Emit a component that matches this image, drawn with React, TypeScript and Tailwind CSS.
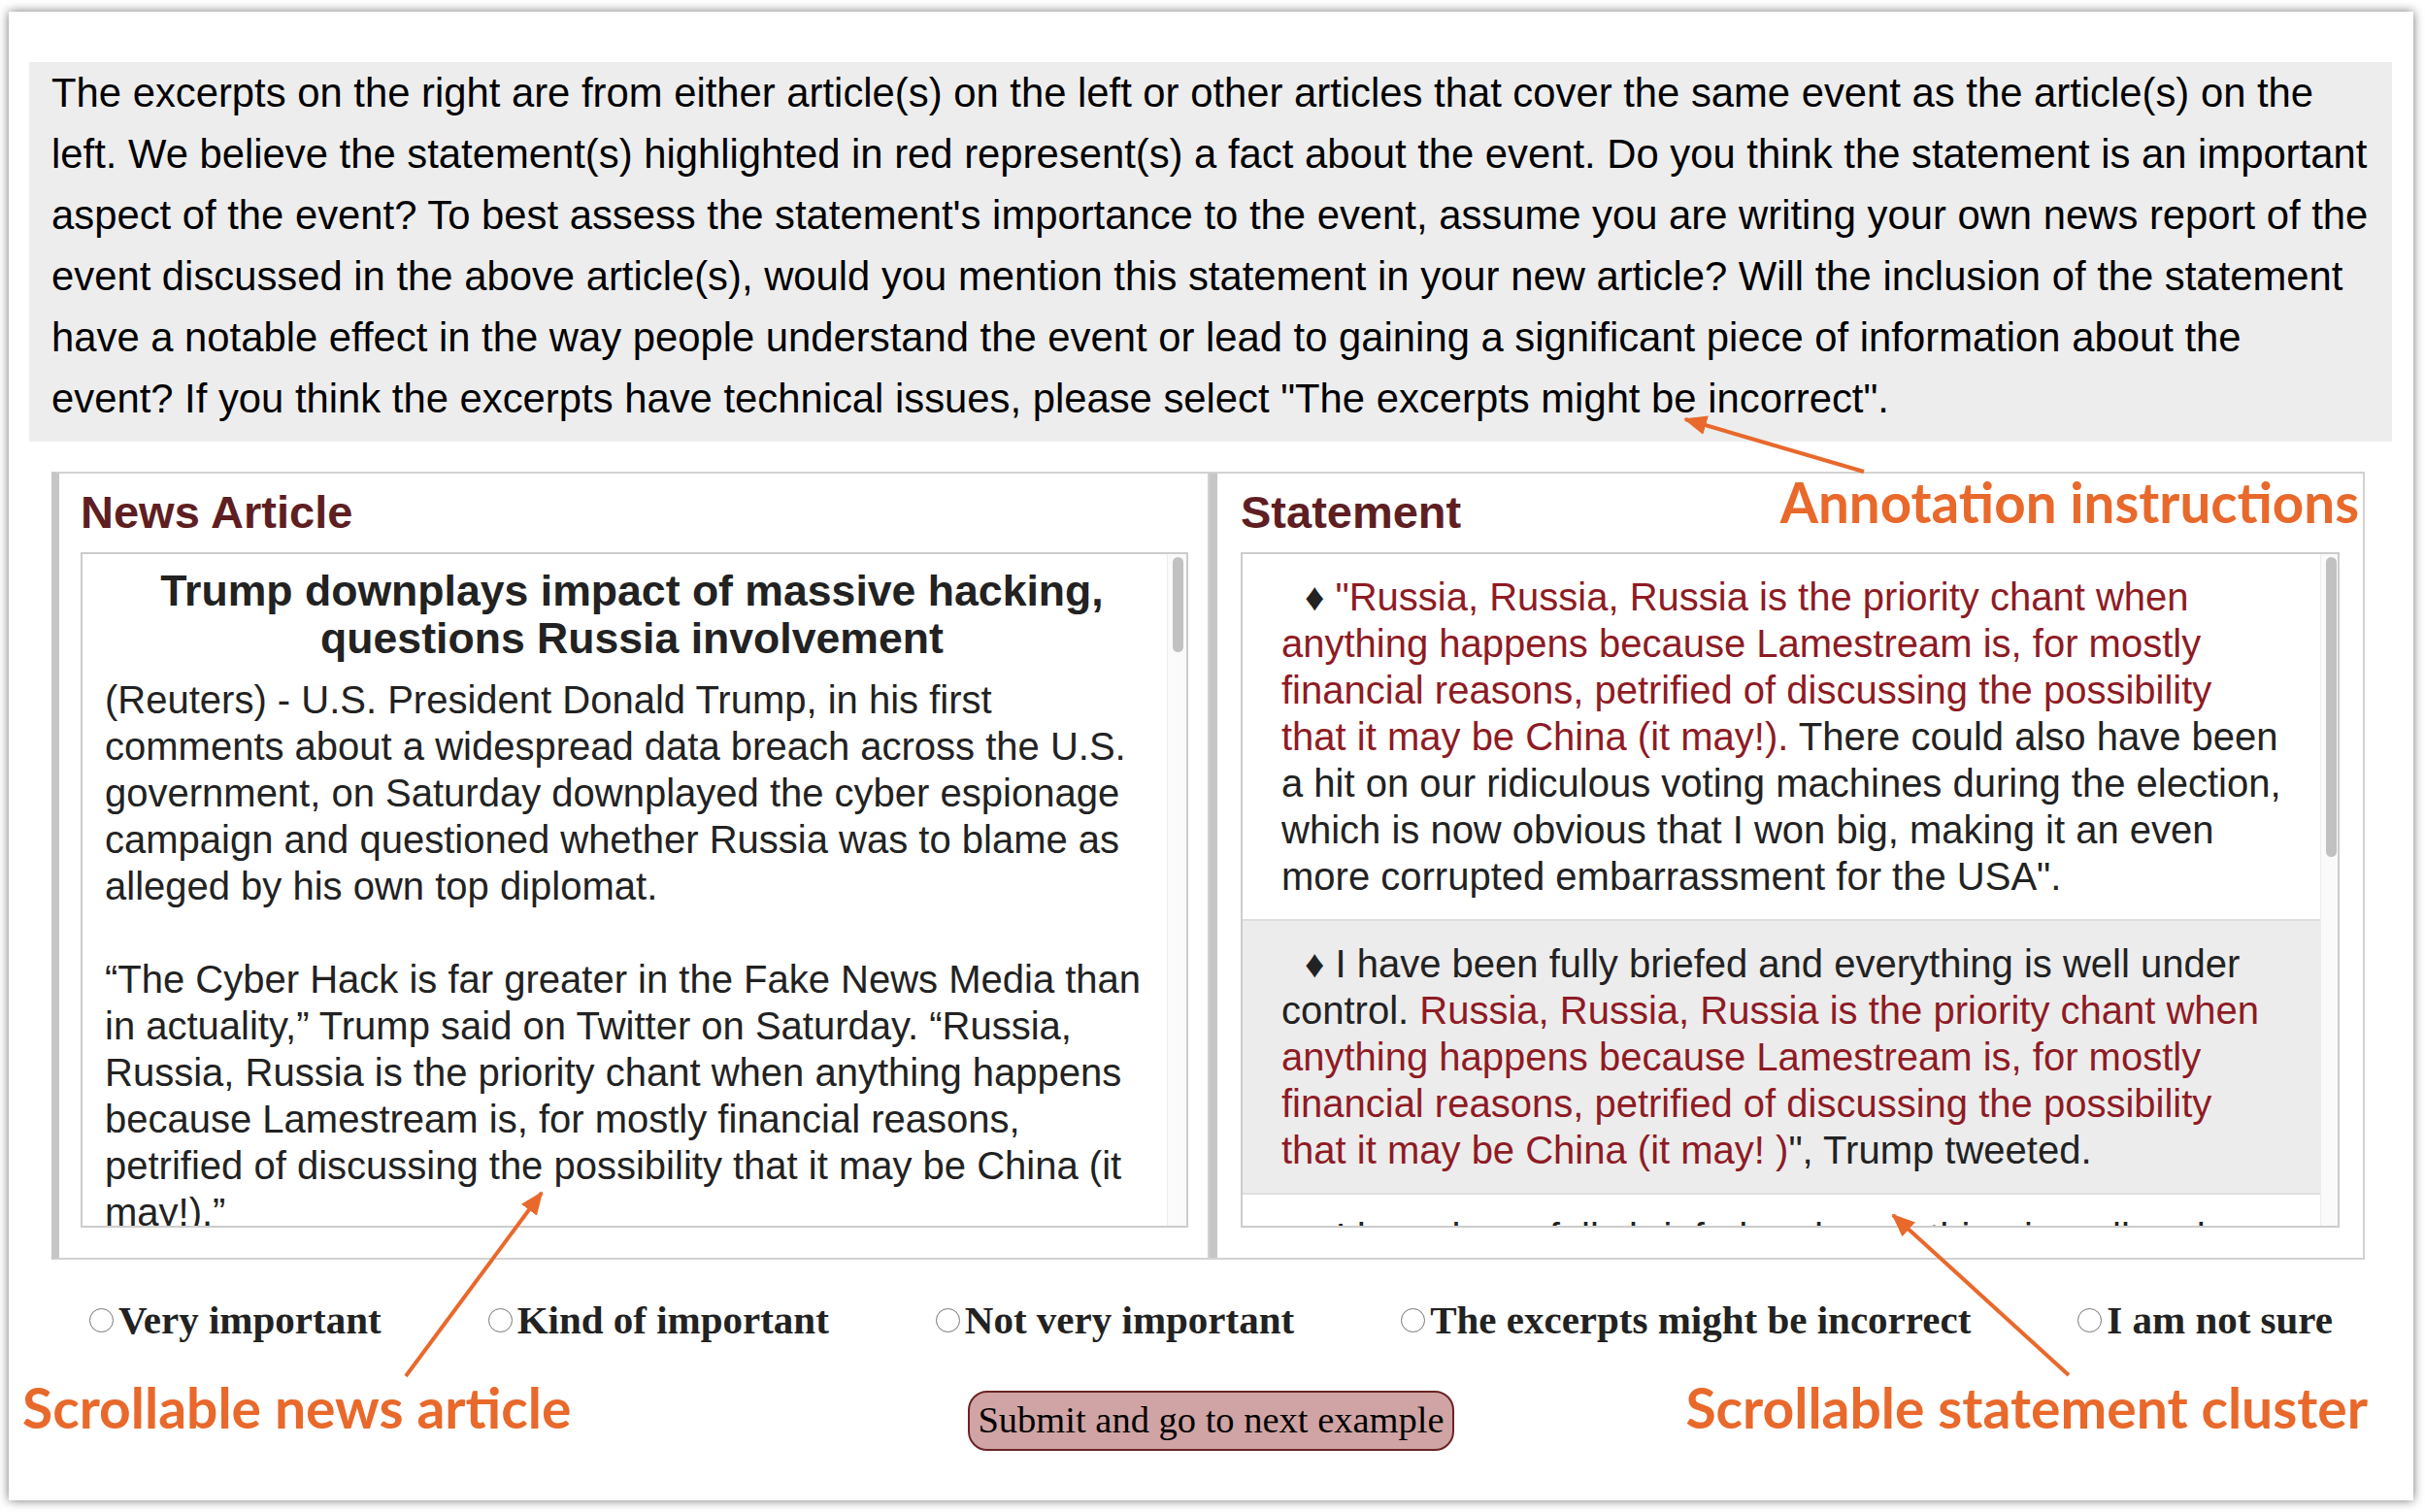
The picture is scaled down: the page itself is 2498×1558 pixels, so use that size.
import React from "react";

export default function App() {
  const red = "text-[#8e1b24]";
  return (
    <div className="relative w-[2498px] h-[1558px] bg-white pl-[9px] pt-[12px] font-['Liberation_Sans',Arial,sans-serif]">
      <div className="w-[2477px] h-[1534px] bg-white shadow-[0_0_10px_rgba(0,0,0,0.55)] flex flex-col">
        {/* Instructions */}
        <div className="mt-[52px] ml-[21px] mr-[22px] bg-[#ededed] pl-[23px] pr-[20px] pb-[13px] text-[41.8px] leading-[63px] text-black">
          The excerpts on the right are from either article(s) on the left or other articles that cover the same event as the article(s) on the left. We believe the statement(s) highlighted in red represent(s) a fact about the event. Do you think the statement is an important aspect of the event? To best assess the statement's importance to the event, assume you are writing your own news report of the event discussed in the above article(s), would you mention this statement in your new article? Will the inclusion of the statement have a notable effect in the way people understand the event or lead to gaining a significant piece of information about the event? If you think the excerpts have technical issues, please select "The excerpts might be incorrect".
        </div>

        {/* Panels */}
        <div className="mt-[31px] ml-[44px] mr-[50px] flex">
          {/* News article panel */}
          <div className="w-[1193px] border-2 border-[#d2d2d2] border-l-[8px] border-l-[#c6c6c6] pt-[13px] pl-[22px] pr-[20px] pb-[31px]">
            <div className="text-[47px] leading-[54px] font-bold text-[#5e1e22]">News Article</div>
            <div className="mt-[14px] h-[696px] border-2 border-[#cccccc] flex">
              <div className="flex-1 overflow-hidden pl-[23px] pr-[8px] pt-[13px] text-[#222]">
                <div className="text-center font-bold text-[44.6px] leading-[49px]">
                  Trump downplays impact of massive hacking, questions Russia involvement
                </div>
                <div className="mt-[15px] text-[40px] leading-[48px]">
                  <p>
                    (Reuters) - U.S. President Donald Trump, in his first comments about a widespread data breach across the U.S. government, on Saturday downplayed the cyber espionage campaign and questioned whether Russia was to blame as alleged by his own top diplomat.
                  </p>
                  <p className="mt-[48px]">
                    “The Cyber Hack is far greater in the Fake News Media than in actuality,” Trump said on Twitter on Saturday. “Russia, Russia, Russia is the priority chant when anything happens because Lamestream is, for mostly financial reasons, petrified of discussing the possibility that it may be China (it may!).”
                  </p>
                </div>
              </div>
              <div className="w-[20px] bg-[#fafafa] border-l border-[#ececec]">
                <div className="mt-[3px] ml-[5px] w-[11px] h-[98px] rounded-full bg-[#c1c1c1]" />
              </div>
            </div>
          </div>

          {/* Statement panel */}
          <div className="flex-1 border-2 border-l-0 border-[#d2d2d2]">
            <div className="h-full border-l-[8px] border-[#c6c6c6] pt-[13px] pl-[24px] pr-[24px] pb-[31px]">
              <div className="flex justify-between">
                <div className="text-[47px] leading-[54px] font-bold text-[#5e1e22]">Statement</div>
                <div className="-mt-[12px] -mr-[20px] font-['Lato',sans-serif] font-bold text-[56.5px] leading-none text-[#e8692b]">
                  Annotation instructions
                </div>
              </div>
              <div className="mt-[14px] h-[696px] border-2 border-[#cccccc] flex">
                <div className="flex-1 overflow-hidden text-[40px] leading-[48px] text-[#222]">
                  <div className="px-[40px] py-[20px] border-b-2 border-[#dedede] indent-[24px]">
                    ♦ <span className={red}>"Russia, Russia, Russia is the priority chant when anything happens because Lamestream is, for mostly financial reasons, petrified of discussing the possibility that it may be China (it may!).</span> There could also have been a hit on our ridiculous voting machines during the election, which is now obvious that I won big, making it an even more corrupted embarrassment for the USA".
                  </div>
                  <div className="px-[40px] py-[20px] border-b-2 border-[#dedede] bg-[#ececec] indent-[24px]">
                    ♦ I have been fully briefed and everything is well under control. <span className={red}>Russia, Russia, Russia is the priority chant when anything happens because Lamestream is, for mostly financial reasons, petrified of discussing the possibility that it may be China (it may! )</span>", Trump tweeted.
                  </div>
                  <div className="px-[40px] py-[20px] indent-[24px]">
                    ♦ I have been fully briefed and everything is well under control. Russia, Russia, Russia is the priority chant when anything happens.
                  </div>
                </div>
                <div className="w-[18px] bg-[#fafafa] border-l border-[#ececec]">
                  <div className="mt-[3px] ml-[5px] w-[11px] h-[309px] rounded-full bg-[#c1c1c1]" />
                </div>
              </div>
            </div>
          </div>
        </div>

        {/* Radio options */}
        <div className="mt-[38px] flex justify-center gap-[110px] font-['Liberation_Serif','Times_New_Roman',serif] font-bold text-[41px] leading-[48px] text-[#222]">
          {["Very important", "Kind of important", "Not very important", "The excerpts might be incorrect", "I am not sure"].map((t) => (
            <label key={t} className="flex items-center gap-[5px]">
              <span className="w-[25px] h-[25px] rounded-full border-[1.5px] border-[#777] bg-white" />
              <span>{t}</span>
            </label>
          ))}
        </div>

        {/* Bottom row */}
        <div className="mt-[40px] px-[14px] grid grid-cols-[1fr_auto_1fr] items-start">
          <div className="-mt-[2px] font-['Lato',sans-serif] font-bold text-[57px] leading-none text-[#e8692b]">
            Scrollable news article
          </div>
          <button className="mt-[9px] h-[62px] px-[8px] rounded-[20px] border-2 border-[#6b2424] bg-[#d0a4a4] font-['Liberation_Serif','Times_New_Roman',serif] text-[38.5px] text-black flex items-center">
            Submit and go to next example
          </button>
          <div className="-mt-[2px] justify-self-end mr-[33px] font-['Lato',sans-serif] font-bold text-[57px] leading-none text-[#e8692b]">
            Scrollable statement cluster
          </div>
        </div>
      </div>

      {/* Annotation arrows */}
      <svg className="absolute left-0 top-0 pointer-events-none" width="2498" height="1558" viewBox="0 0 2498 1558">
        <defs>
          <marker id="ah" markerWidth="6" markerHeight="5" refX="5.5" refY="2.5" orient="auto" markerUnits="strokeWidth">
            <path d="M0,0 L6,2.5 L0,5 z" fill="#e8692b" />
          </marker>
        </defs>
        <line x1="1920" y1="486" x2="1736" y2="432" stroke="#e8692b" strokeWidth="4" markerEnd="url(#ah)" />
        <line x1="418" y1="1418" x2="558" y2="1229" stroke="#e8692b" strokeWidth="4" markerEnd="url(#ah)" />
        <line x1="2131" y1="1417" x2="1950" y2="1252" stroke="#e8692b" strokeWidth="4" markerEnd="url(#ah)" />
      </svg>
    </div>
  );
}
